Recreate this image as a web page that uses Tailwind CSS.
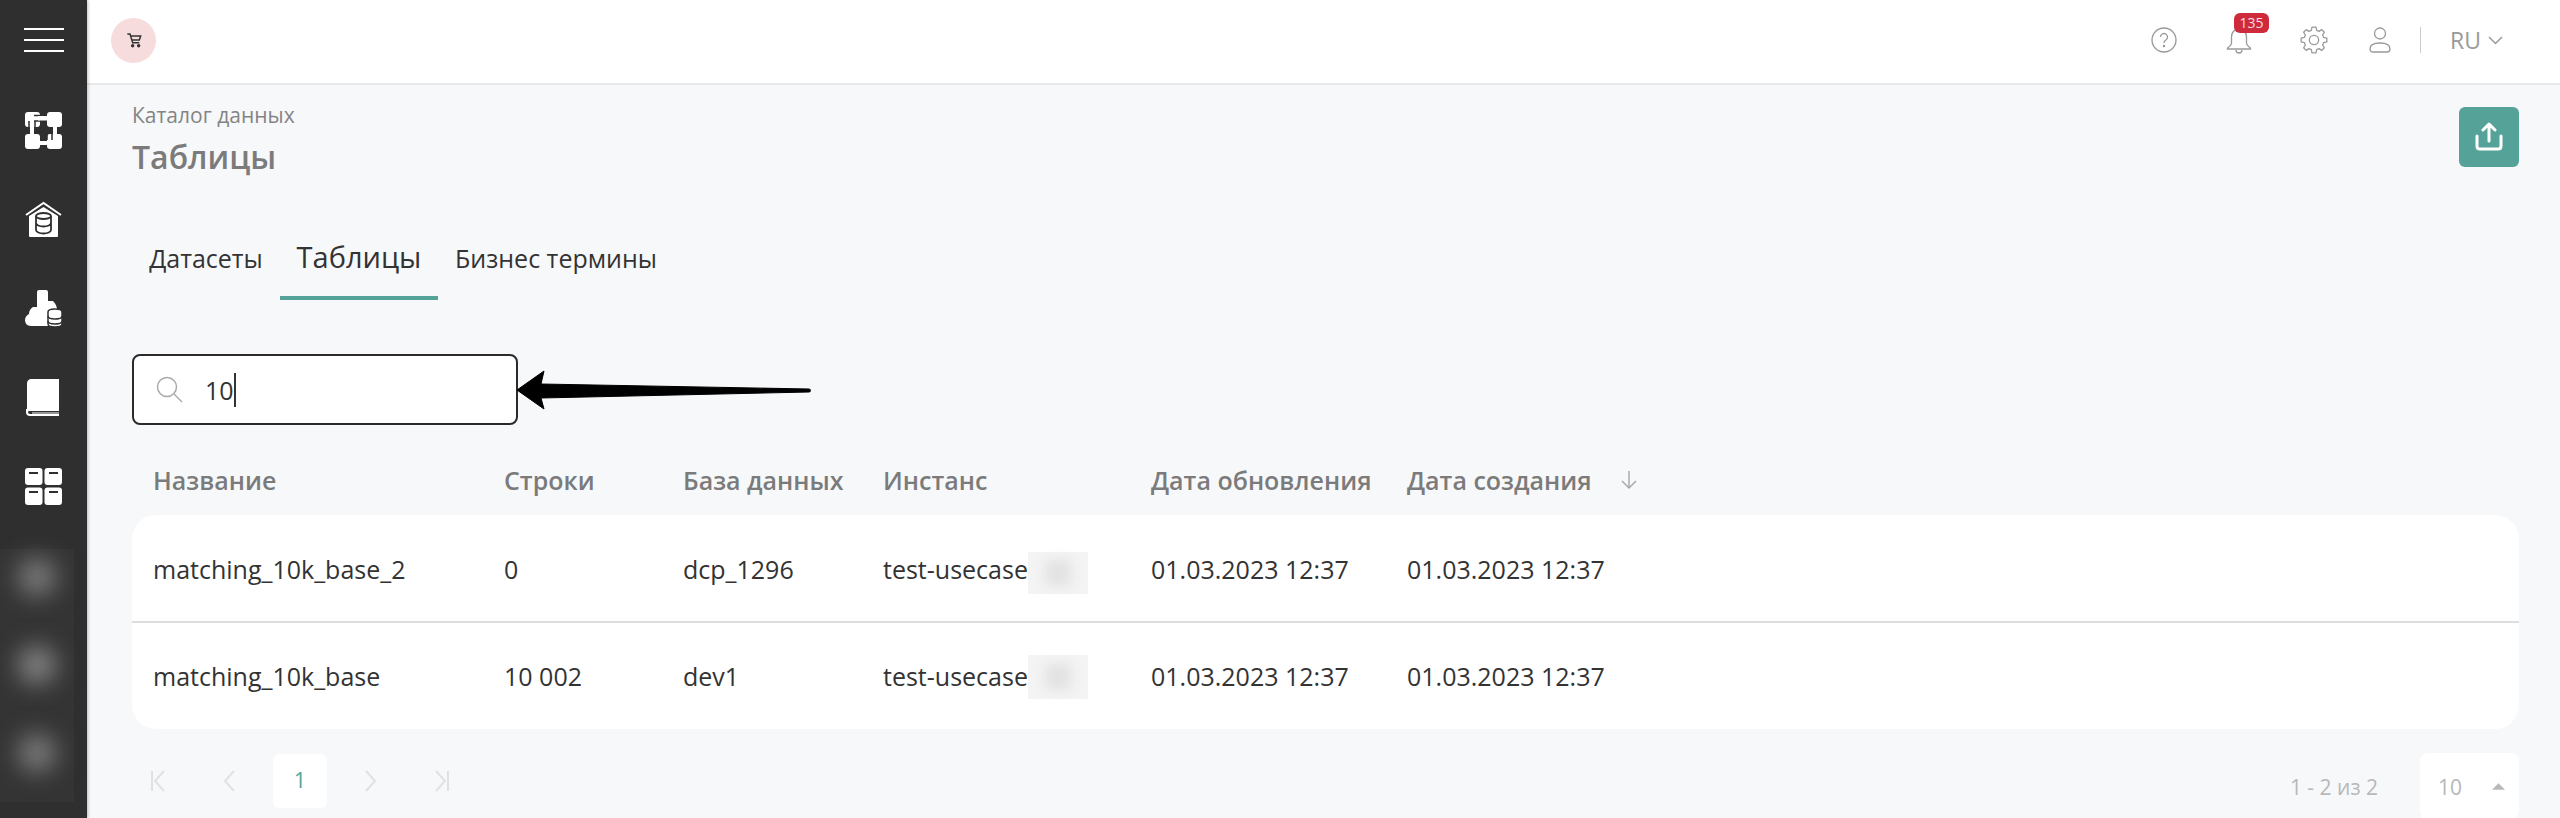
<!DOCTYPE html>
<html lang="ru">
<head>
    <meta charset="UTF-8">
    <title>Таблицы</title>
    <script src="https://cdn.jsdelivr.net/npm/@tailwindcss/browser@4"></script>
</head>
<body class="h-[818px] overflow-hidden bg-[#f7f8fa] font-['Open_Sans',sans-serif] text-[#333]">
<div class="flex h-[818px]">
    <!-- sidebar -->
    <aside class="w-[87px] shrink-0 bg-[#2f2f2f] flex flex-col items-center overflow-hidden shadow-[1px_0_3px_rgba(0,0,0,0.25)] z-10">
        <div class="h-[80px] shrink-0 flex flex-col justify-center gap-[9px]">
            <div class="w-[40px] h-[2px] bg-white"></div>
            <div class="w-[40px] h-[2px] bg-white"></div>
            <div class="w-[40px] h-[2px] bg-white"></div>
        </div>
        <div class="mt-[32px] flex flex-col gap-[52px] text-white">
            <svg class="w-[37px] h-[37px]" viewBox="0 0 37 37" fill="#fff">
                <rect x="0" y="0" width="15" height="15" rx="3"/><rect x="22" y="0" width="15" height="15" rx="3"/><rect x="0" y="22" width="15" height="15" rx="3"/><rect x="22" y="22" width="15" height="15" rx="3"/>
                <path d="M9 3.500h6M9 9h6M4 9v6M10 9v6M22 28v-6M27 28v-6M33 22v-6M22 28h-6M22 33.500h-6" fill="none" stroke="#2f2f2f" stroke-width="1.500"/>
                <rect x="13" y="4" width="12" height="4.500"/><rect x="5" y="13" width="4" height="11"/><rect x="28" y="13" width="4" height="11"/><rect x="12" y="29" width="12" height="4"/>
            </svg>
            <svg class="w-[37px] h-[37px]" viewBox="0 0 37 37">
                <path d="M1 14 18.500 2 36 14" fill="none" stroke="#fff" stroke-width="2"/>
                <path d="M4 15 18.500 6 33 15v20a1 1 0 0 1-1 1H5a1 1 0 0 1-1-1z" fill="#fff"/>
                <g fill="none" stroke="#2f2f2f" stroke-width="1.800"><ellipse cx="18.500" cy="15" rx="7.500" ry="3"/><path d="M11 15v14c0 2 3.500 3.500 7.500 3.500s7.500-1.500 7.500-3.500V15M11 22c0 2 3.500 3.500 7.500 3.500S26 24 26 22"/></g>
            </svg>
            <svg class="w-[37px] h-[37px]" viewBox="0 0 37 37">
                <path d="M12 2a2 2 0 0 1 2-2h7a2 2 0 0 1 2 2v9h5c3 3 4 6 4 9v16H6c-4 0-6-3-6-6s2-5 4-6c0-3 1-5 4-7h4z" fill="#fff"/>
                <g stroke="#2f2f2f" stroke-width="1.500" fill="#fff"><path d="M23 22c0-2 3-3 7-3s7 1 7 3v12c0 2-3 3-7 3s-7-1-7-3z"/><path d="M23 26c0 2 3 3 7 3s7-1 7-3M23 31c0 2 3 3 7 3s7-1 7-3" fill="none"/></g>
            </svg>
            <svg class="w-[37px] h-[37px]" viewBox="0 0 37 37">
                <path d="M6 0h28v32H6c-2 0-3 .5-4 1V4c0-2 2-4 4-4z" fill="#fff"/>
                <path d="M2 30v3c0 2 1 3 3 3h29" fill="none" stroke="#fff" stroke-width="2"/>
                <path d="M7 34h27" stroke="#fff" stroke-width="1"/>
            </svg>
            <svg class="w-[37px] h-[37px]" viewBox="0 0 37 37" fill="#fff">
                <rect x="0" y="0" width="17.500" height="17" rx="3"/><rect x="19.500" y="0" width="17.500" height="17" rx="3"/><rect x="0" y="19.500" width="17.500" height="17.500" rx="3"/><rect x="19.500" y="19.500" width="17.500" height="17.500" rx="3"/>
                <path d="M4 5h9M24 5h9M4 24h9M24 24h9" stroke="#2f2f2f" stroke-width="2"/>
            </svg>
        </div>
        <!-- blurred menu items -->
        <div class="mt-[44px] self-start w-[74px] h-[253px] bg-[#343434] flex flex-col items-center gap-[50px] pt-[9px]">
            <div class="w-[38px] h-[38px] rounded-full bg-[#7c7c7c] blur-[12px]"></div>
            <div class="w-[38px] h-[38px] rounded-full bg-[#858585] blur-[12px]"></div>
            <div class="w-[38px] h-[38px] rounded-full bg-[#7c7c7c] blur-[12px]"></div>
        </div>
    </aside>

    <div class="flex-1 min-w-0 flex flex-col">
        <!-- top bar -->
        <header class="h-[85px] shrink-0 bg-white border-b-2 border-[#e8e9eb] flex items-center justify-between pl-[24px] pr-[57px] pb-[3px]">
            <div class="w-[45px] h-[45px] rounded-full bg-[#f6dcdc] flex items-center justify-center">
                <svg class="w-[16px] h-[16px]" viewBox="0 0 24 24" fill="none" stroke="#333" stroke-width="2.200"><path d="M2 3h4l4 13h10"/><path d="M7 6h15l-2 6H9"/><circle cx="10" cy="20.500" r="1.500" fill="#333"/><circle cx="19" cy="20.500" r="1.500" fill="#333"/></svg>
            </div>
            <div class="flex items-center text-[#999]">
                <svg class="w-[26px] h-[26px]" viewBox="0 0 26 26" fill="none" stroke="#999" stroke-width="1.300"><circle cx="13" cy="13" r="12"/><path d="M9.500 10a3.500 3.500 0 1 1 5.400 3c-1.300.8-1.900 1.500-1.900 3"/><circle cx="13" cy="19" r=".6" fill="#999"/></svg>
                <div class="relative ml-[49px] w-[26px] h-[30px]">
                    <svg class="w-[26px] h-[30px]" viewBox="0 0 26 30" fill="none" stroke="#999" stroke-width="1.300"><path d="M13 4c-5 0-7.500 4-7.500 8v6c0 2-2 3.500-4 5v1h23v-1c-2-1.500-4-3-4-5v-6c0-4-2.500-8-7.500-8z"/><path d="M10 25a3 3 0 0 0 6 0"/></svg>
                    <span class="absolute left-[8px] -top-[12px] w-[35px] h-[20px] rounded-[6px] bg-[#cf2a3c] text-[#f6dfe1] text-[14px] leading-[20px] text-center">135</span>
                </div>
                <svg class="ml-[48px] w-[28px] h-[28px]" viewBox="0 0 24 24" fill="none" stroke="#999" stroke-width="1.100"><path d="M10.300 1h3.400l.6 2.800 2 .8 2.400-1.500 2.200 2.200-1.500 2.400.8 2 2.800.6v3.400l-2.800.6-.8 2 1.500 2.400-2.200 2.200-2.400-1.500-2 .8-.6 2.800h-3.400l-.6-2.800-2-.8-2.400 1.500-2.200-2.200 1.500-2.400-.8-2-2.800-.6v-3.400l2.800-.6.8-2-1.500-2.400 2.200-2.200 2.400 1.500 2-.8z" stroke-linejoin="round"/><circle cx="12" cy="12" r="4"/></svg>
                <svg class="ml-[41px] w-[22px] h-[26px]" viewBox="0 0 22 26" fill="none" stroke="#999" stroke-width="1.300"><circle cx="11" cy="6.500" r="5.500"/><path d="M1 22c0-4 3-6 10-6s10 2 10 6c0 2-1 3-3 3H4c-2 0-3-1-3-3z"/></svg>
                <div class="ml-[29px] w-[1px] h-[26px] bg-[#ccc]"></div>
                <span class="ml-[29px] text-[23px] leading-none">RU</span>
                <svg class="ml-[7px] w-[15px] h-[9px]" viewBox="0 0 15 9" fill="none" stroke="#999" stroke-width="1.500"><path d="M1 1l6.500 6.500L14 1"/></svg>
            </div>
        </header>

        <main class="relative flex-1 pl-[45px] pr-[41px]">
            <div class="flex justify-between">
                <div>
                    <div class="mt-[17px] text-[21px] leading-[27px] text-[#848484]">Каталог данных</div>
                    <h1 class="mt-[8px] text-[32px] leading-[40px] font-semibold text-[#7b7b7b]">Таблицы</h1>
                </div>
                <button class="mt-[22px] w-[60px] h-[60px] rounded-[6px] bg-[#55a398] flex items-center justify-center">
                    <svg class="w-[28px] h-[30px]" viewBox="0 0 28 30" fill="none" stroke="#fff" stroke-width="3" stroke-linecap="round" stroke-linejoin="round"><path d="M14 19V3M8 8l6-6 6 6"/><path d="M2 14v10c0 2 1 3 3 3h18c2 0 3-1 3-3V14"/></svg>
                </button>
            </div>

            <nav class="mt-[37px] flex h-[86px]">
                <a class="w-[148px] flex items-center justify-center pt-[4px] text-[25px] text-[#333]">Датасеты</a>
                <a class="w-[158px] flex items-center justify-center pt-[4px] text-[29px] text-[#333] border-b-[4px] border-[#55a398]">Таблицы</a>
                <a class="w-[236px] flex items-center justify-center pt-[4px] text-[25px] text-[#333]">Бизнес термины</a>
            </nav>

            <div class="mt-[54px] w-[386px] h-[71px] rounded-[8px] border-2 border-[#2b2b2b] bg-white flex items-center pl-[22px]">
                <svg class="w-[27px] h-[27px]" viewBox="0 0 27 27" fill="none" stroke="#aaa" stroke-width="1.500"><circle cx="11" cy="11" r="9.500"/><path d="M18 18l8 8"/></svg>
                <span class="ml-[22px] text-[25px] border-r-2 border-[#333] leading-[34px]">10</span>
            </div>

            <!-- arrow annotation -->
            <svg class="absolute left-[428px] top-[283px] w-[300px] h-[44px]" viewBox="0 0 300 44"><path d="M2 22 29 3l-3 13 268 5a1.500 1.500 0 0 1 0 3L26 30l3 11z" fill="#000" stroke="#000" stroke-linejoin="round"/></svg>

            <div class="mt-[39px] grid grid-cols-[351px_179px_200px_268px_256px_1fr] pl-[21px] text-[25px] leading-[32px] font-semibold text-[#7b7b7b] h-[51px]">
                <div>Название</div>
                <div>Строки</div>
                <div>База данных</div>
                <div>Инстанс</div>
                <div>Дата обновления</div>
                <div class="flex items-center gap-[28px] h-[32px]">Дата создания
                    <svg class="w-[18px] h-[20px]" viewBox="0 0 18 20" fill="none" stroke="#aaa" stroke-width="1.500"><path d="M9 1v17M2 11l7 7 7-7"/></svg>
                </div>
            </div>

            <div class="bg-white rounded-[24px] text-[25px] text-[#333]">
                <div class="grid grid-cols-[351px_179px_200px_268px_256px_1fr] items-center pl-[21px] pt-[4px] h-[108px] border-b-2 border-[#dcdddf]">
                    <div>matching_10k_base_2</div>
                    <div>0</div>
                    <div>dcp_1296</div>
                    <div class="flex items-center">test-usecase<span class="w-[60px] h-[42px] mt-[6px] bg-[#f4f4f4] flex items-center justify-center"><span class="w-[26px] h-[26px] bg-[#e2e2e2] blur-[6px]"></span></span></div>
                    <div>01.03.2023 12:37</div>
                    <div>01.03.2023 12:37</div>
                </div>
                <div class="grid grid-cols-[351px_179px_200px_268px_256px_1fr] items-center pl-[21px] pt-[2px] h-[106px]">
                    <div>matching_10k_base</div>
                    <div>10 002</div>
                    <div>dev1</div>
                    <div class="flex items-center">test-usecase<span class="w-[60px] h-[44px] bg-[#f4f4f4] flex items-center justify-center"><span class="w-[26px] h-[26px] bg-[#e2e2e2] blur-[6px]"></span></span></div>
                    <div>01.03.2023 12:37</div>
                    <div>01.03.2023 12:37</div>
                </div>
            </div>

            <div class="mt-[24px] flex items-start justify-between">
                <div class="flex items-center h-[54px] mt-[1px] text-[#e0e1e3] pl-[18px]">
                    <svg class="w-[16px] h-[22px]" viewBox="0 0 16 22" fill="none" stroke="currentColor" stroke-width="2"><path d="M2 1v20M14 1 5 11l9 10"/></svg>
                    <svg class="ml-[57px] w-[12px] h-[22px]" viewBox="0 0 12 22" fill="none" stroke="currentColor" stroke-width="2"><path d="M11 1 2 11l9 10"/></svg>
                    <div class="ml-[38px] w-[54px] h-[54px] rounded-[6px] bg-white flex items-center justify-center text-[21px] text-[#55a398]">1</div>
                    <svg class="ml-[38px] w-[12px] h-[22px]" viewBox="0 0 12 22" fill="none" stroke="currentColor" stroke-width="2"><path d="M1 1l9 10-9 10"/></svg>
                    <svg class="ml-[57px] w-[16px] h-[22px]" viewBox="0 0 16 22" fill="none" stroke="currentColor" stroke-width="2"><path d="M14 1v20M2 1l9 10-9 10"/></svg>
                </div>
                <div class="flex items-start text-[#b8b8b8] text-[21px]">
                    <span class="leading-[68px]">1 - 2 из 2</span>
                    <div class="ml-[42px] w-[99px] h-[66px] rounded-[8px] bg-white flex items-start pl-[18px] leading-[68px]">10
                        <svg class="ml-[30px] mt-[30px] w-[13px] h-[7px]" viewBox="0 0 14 7" fill="#b8b8b8"><path d="M7 0l7 7H0z"/></svg>
                    </div>
                </div>
            </div>
        </main>
    </div>
</div>
</body>
</html>
